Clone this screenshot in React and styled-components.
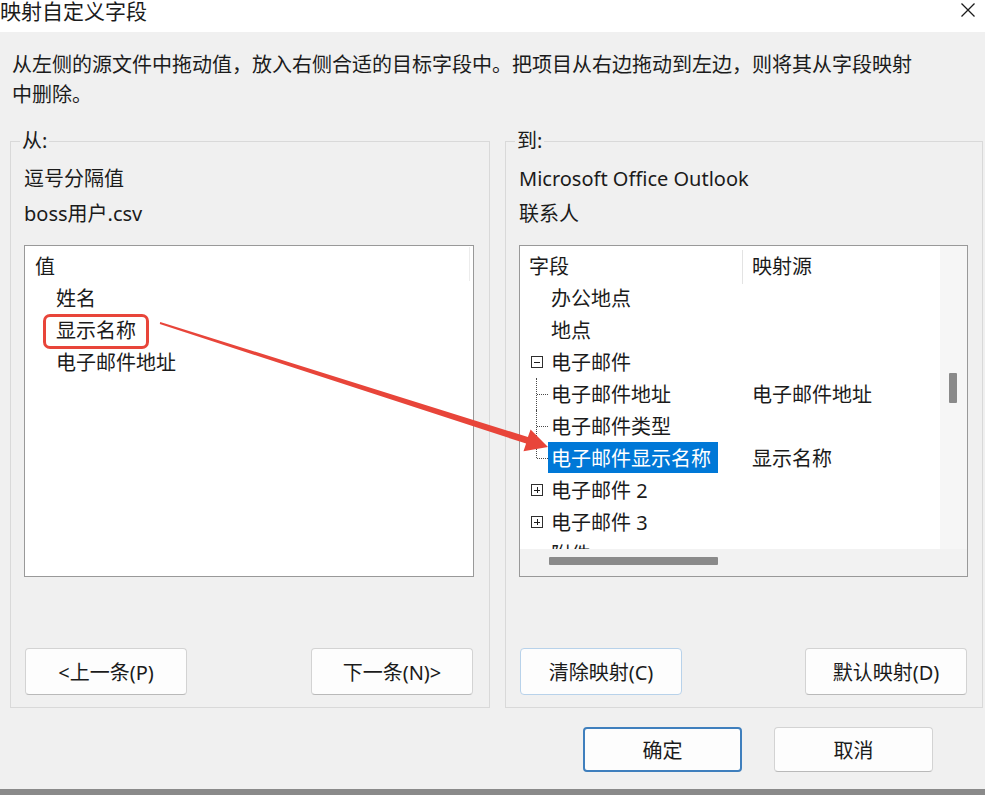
import React from 'react';
import styled, { createGlobalStyle, css } from 'styled-components';

const GlobalStyle = createGlobalStyle`
  html, body {
    margin: 0;
    padding: 0;
  }

  body {
    width: 985px;
    height: 795px;
    overflow: hidden;
    background: #8a8a8a;
    color: #1b1b1b;
    font-family: "Noto Sans", "Noto Sans CJK SC", sans-serif;
  }
`;

const SWindow = styled.div`
  position: relative;
  display: flex;
  flex-direction: column;
  width: 985px;
  height: 789px;
  background: #f0f0f0;
`;

const STitleBar = styled.header`
  display: flex;
  flex: none;
  justify-content: space-between;
  align-items: flex-start;
  height: 32px;
  background: #ffffff;
`;

const STitle = styled.h1`
  margin: 0;
  font-size: 21px;
  font-weight: 400;
  line-height: 23px;
`;

const SClose = styled.button`
  width: 16px;
  height: 16px;
  margin: 2px 9px 0 0;
  padding: 0;
  border: none;
  background: none;
`;

const SBody = styled.main`
  display: flex;
  flex: 1;
  flex-direction: column;
  padding: 17px 2px 0 10px;
`;

const SIntro = styled.p`
  width: 905px;
  margin: 0 0 0 2px;
  padding-top: 1px;
  font-size: 20px;
  line-height: 30px;
`;

const SColumns = styled.div`
  display: grid;
  grid-template-columns: 480px 478px;
  column-gap: 15px;
  height: 581px;
  margin-top: 17px;
`;

const SGroup = styled.fieldset`
  display: flex;
  flex-direction: column;
  box-sizing: border-box;
  min-width: 0;
  height: 100%;
  margin: 0;
  padding: 9px ${({ $right }) => ($right ? 14 : 15)}px 12px 13px;
  border: 1px solid #d9d9d9;
`;

const SLegend = styled.legend`
  margin-left: -4px;
  padding: 0 2px;
  font-size: 20px;
  line-height: 28px;
`;

const SCaption = styled.div`
  padding-top: 1px;
  font-size: 20px;
  line-height: 28px;
  white-space: nowrap;

  & + & {
    margin-top: 6px;
  }
`;

const SListBox = styled.div`
  position: relative;
  box-sizing: border-box;
  height: 332px;
  margin-top: 17px;
  padding-top: 5px;
  border: 1px solid #999999;
  background: #ffffff;
  overflow: hidden;
`;

const SListHeader = styled.div`
  height: 32px;
  padding-left: 10px;
  font-size: 20px;
  line-height: 32px;

  &::after {
    content: '';
    position: absolute;
    top: 1px;
    right: 3px;
    width: 1px;
    height: 34px;
    background: #ececec;
  }
`;

const SListItem = styled.div`
  height: 32px;
  padding-left: 31px;
  font-size: 20px;
  line-height: 32px;
`;

const SMarked = styled.span`
  position: relative;
  display: inline-block;

  &::after {
    content: '';
    position: absolute;
    top: -1px;
    right: -13px;
    bottom: -2px;
    left: -13px;
    border: 3px solid #e8453a;
    border-radius: 7px;
  }
`;

const SGrid = styled.div`
  display: grid;
  grid-template-columns: 1fr 27px;
  grid-template-rows: 1fr 27px;
  box-sizing: border-box;
  height: 332px;
  margin-top: 17px;
  border: 1px solid #999999;
  background: #ffffff;
`;

const SGridContent = styled.div`
  padding-top: 4px;
  overflow: hidden;
`;

const SRow = styled.div`
  display: grid;
  grid-template-columns: 223px 1fr;
  height: 32px;
  font-size: 20px;
  line-height: 34px;
  white-space: nowrap;
`;

const SHeadCell = styled.div`
  padding-left: 9px;
  ${({ $divider }) =>
    $divider &&
    css`
      border-right: 1px solid #e3e3e3;
    `}
`;

const SFieldCell = styled.div`
  display: flex;
  padding-left: 9px;
`;

const SSourceCell = styled.div`
  padding-left: 9px;
`;

const SGutter = styled.span`
  position: relative;
  flex: none;
  width: 19px;
  height: 32px;

  ${({ $kind }) =>
    ($kind === 'plus' || $kind === 'minus') &&
    css`
      &::before {
        content: '';
        position: absolute;
        top: 10px;
        left: 2px;
        box-sizing: border-box;
        width: 12px;
        height: 12px;
        border: 1px solid #2e2e2e;
        background:
          linear-gradient(#1e1e1e, #1e1e1e) center / 6px 1px no-repeat
          ${$kind === 'plus' ? ', linear-gradient(#1e1e1e, #1e1e1e) center / 1px 6px no-repeat' : ''};
      }
    `}

  ${({ $kind }) =>
    ($kind === 'branch' || $kind === 'last') &&
    css`
      &::before {
        content: '';
        position: absolute;
        top: 0;
        left: 7px;
        height: ${$kind === 'last' ? '16px' : '32px'};
        border-left: 1px dotted #4a4a4a;
      }

      &::after {
        content: '';
        position: absolute;
        top: 16px;
        left: 8px;
        width: 11px;
        border-top: 1px dotted #4a4a4a;
      }
    `}
`;

const SFieldLabel = styled.span`
  height: 31px;
  padding: 0 7px 0 3px;
  line-height: 33px;

  ${({ $selected }) =>
    $selected &&
    css`
      background: #0078d7;
      color: #ffffff;
    `}
`;

const SVScroll = styled.div`
  padding: 127px 0 0 9px;
  background: #f6f6f6;
`;

const SVThumb = styled.div`
  width: 8px;
  height: 30px;
  border-radius: 1px;
  background: #8a8a8a;
`;

const SHScroll = styled.div`
  padding: 8px 0 0 29px;
  background: #f2f2f2;
`;

const SHThumb = styled.div`
  width: 169px;
  height: 8px;
  border-radius: 1px;
  background: #8a8a8a;
`;

const SCorner = styled.div`
  background: #f2f2f2;
`;

const SButtonRow = styled.div`
  display: flex;
  justify-content: space-between;
  margin-top: auto;
  padding: 0 1px;
`;

const SButton = styled.button`
  box-sizing: border-box;
  width: ${({ $wide }) => ($wide ? 162 : 159)}px;
  height: ${({ $wide }) => ($wide ? 47 : 45)}px;
  padding: 0;
  border: 1px solid #d3d3d3;
  border-bottom-color: #b9b9b9;
  border-radius: 4px;
  background: #fdfdfd;
  color: #1b1b1b;
  font-family: inherit;
  font-size: 20px;

  ${({ $focus }) =>
    $focus &&
    css`
      border-color: #b8d2ea;
    `}

  ${({ $primary }) =>
    $primary &&
    css`
      border: 2px solid #3f7fbd;
    `}
`;

const SFooter = styled.div`
  display: flex;
  justify-content: flex-end;
  gap: 32px;
  margin-top: 19px;
  padding-right: 50px;
`;

const SOverlay = styled.svg`
  position: absolute;
  top: 0;
  left: 0;
  z-index: 2;
  pointer-events: none;
`;

const TREE = [
  { field: '办公地点', kind: 'none' },
  { field: '地点', kind: 'none' },
  { field: '电子邮件', kind: 'minus' },
  { field: '电子邮件地址', kind: 'branch', source: '电子邮件地址' },
  { field: '电子邮件类型', kind: 'branch' },
  { field: '电子邮件显示名称', kind: 'last', source: '显示名称', selected: true },
  { field: '电子邮件 2', kind: 'plus' },
  { field: '电子邮件 3', kind: 'plus' },
  { field: '附件', kind: 'none' },
];

function CloseIcon() {
  return (
    <svg width="16" height="16" viewBox="0 0 16 16">
      <path d="M1.5 1.5 L14.5 14.5 M14.5 1.5 L1.5 14.5" stroke="#1b1b1b" strokeWidth="1.3" />
    </svg>
  );
}

function DragArrow() {
  return (
    <SOverlay width="985" height="789" viewBox="0 0 985 789">
      <polygon
        points="160.2,322 527.9,437 530.6,429.4 548,447 523.5,451.2 526.1,443.6 159.8,324"
        fill="#e8453a"
      />
    </SOverlay>
  );
}

function App() {
  return (
    <>
      <GlobalStyle />
      <SWindow>
        <STitleBar>
          <STitle>映射自定义字段</STitle>
          <SClose type="button" aria-label="关闭">
            <CloseIcon />
          </SClose>
        </STitleBar>

        <SBody>
          <SIntro>
            从左侧的源文件中拖动值，放入右侧合适的目标字段中。把项目从右边拖动到左边，则将其从字段映射中删除。
          </SIntro>

          <SColumns>
            <SGroup>
              <SLegend>从:</SLegend>
              <SCaption>逗号分隔值</SCaption>
              <SCaption>boss用户.csv</SCaption>
              <SListBox>
                <SListHeader>值</SListHeader>
                <SListItem>姓名</SListItem>
                <SListItem>
                  <SMarked>显示名称</SMarked>
                </SListItem>
                <SListItem>电子邮件地址</SListItem>
              </SListBox>
              <SButtonRow>
                <SButton type="button" $wide>&lt;上一条(P)</SButton>
                <SButton type="button" $wide>下一条(N)&gt;</SButton>
              </SButtonRow>
            </SGroup>

            <SGroup $right>
              <SLegend>到:</SLegend>
              <SCaption>Microsoft Office Outlook</SCaption>
              <SCaption>联系人</SCaption>
              <SGrid>
                <SGridContent>
                  <SRow>
                    <SHeadCell $divider>字段</SHeadCell>
                    <SHeadCell>映射源</SHeadCell>
                  </SRow>
                  {TREE.map((row) => (
                    <SRow key={row.field}>
                      <SFieldCell>
                        <SGutter $kind={row.kind} />
                        <SFieldLabel $selected={row.selected}>{row.field}</SFieldLabel>
                      </SFieldCell>
                      <SSourceCell>{row.source}</SSourceCell>
                    </SRow>
                  ))}
                </SGridContent>
                <SVScroll>
                  <SVThumb />
                </SVScroll>
                <SHScroll>
                  <SHThumb />
                </SHScroll>
                <SCorner />
              </SGrid>
              <SButtonRow>
                <SButton type="button" $wide $focus>清除映射(C)</SButton>
                <SButton type="button" $wide>默认映射(D)</SButton>
              </SButtonRow>
            </SGroup>
          </SColumns>

          <SFooter>
            <SButton type="button" $primary>确定</SButton>
            <SButton type="button">取消</SButton>
          </SFooter>
        </SBody>

        <DragArrow />
      </SWindow>
    </>
  );
}

export default App;
